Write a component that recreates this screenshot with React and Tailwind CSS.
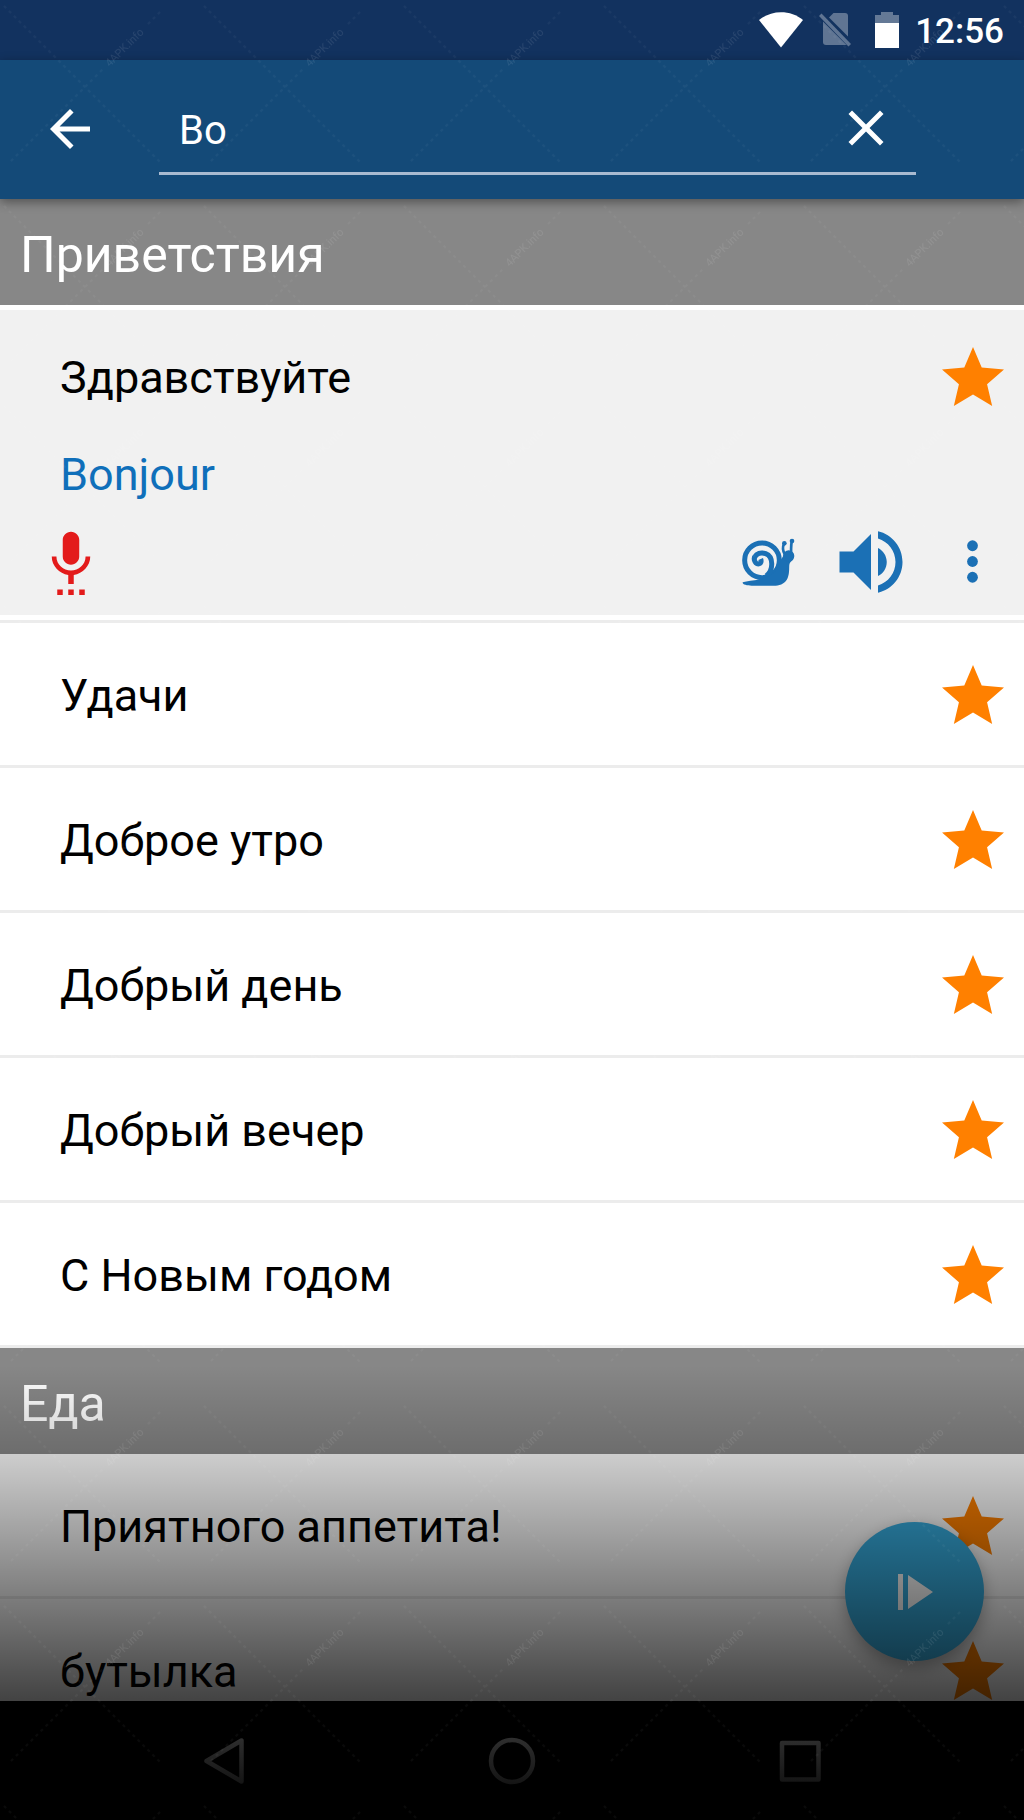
import React, { useState } from "react";

const greetings = ["Удачи", "Доброе утро", "Добрый день", "Добрый вечер", "С Новым годом"];
const food = ["Приятного аппетита!", "бутылка"];

function StatusBar() {
  return (
    <div className="flex h-[60px] shrink-0 items-center justify-end bg-[#12325f] pr-5 text-white">
      <svg className="mr-4 h-9 w-11" viewBox="0 0 44 36" fill="currentColor" aria-hidden="true">
        <path d="M0 8C12-2.500 32-2.500 44 8L22 35.500Z" />
      </svg>
      <svg className="mr-6 h-9 w-8" viewBox="0 0 32 36" fill="#fff" fillOpacity="0.33" aria-hidden="true">
        <path d="M10 5.500L14.500 1H26Q29 1 29 4V24.500Z" />
        <path d="M4 9.500L27.500 33H7Q4 33 4 30Z" />
        <path d="M0 4L2.500 1.500L32 32L29.500 34.500L27 32Z" />
      </svg>
      <svg className="mr-4 h-9 w-6" viewBox="0 0 24 36" fill="#fff" aria-hidden="true">
        <path fillOpacity="0.35" d="M6 0H18V3H24V11H0V3H6Z" />
        <path d="M0 11H24V36H0Z" />
      </svg>
      <span className="pt-1 text-[35px] leading-10 font-medium">12:56</span>
    </div>
  );
}

function SearchBar() {
  const [query, setQuery] = useState("Bo");
  return (
    <header className="relative z-10 flex shrink-0 items-start bg-[#144a78] pt-7 pb-6 pl-10 text-white shadow-[0_3px_10px_rgba(0,0,0,0.4)]">
      <button type="button" aria-label="Назад" className="flex h-[84px] w-[60px] items-center justify-center pb-[2px]">
        <svg className="size-[60px]" viewBox="0 0 24 24" fill="currentColor">
          <path d="M20 11H7.830l5.590-5.590L12 4l-8 8 8 8 1.410-1.410L7.830 13H20v-2z" />
        </svg>
      </button>
      <div className="mr-[108px] ml-[59px] flex min-w-0 flex-1 items-center border-b-[3px] border-[#a9bad0] px-5">
        <input
          type="text"
          aria-label="Поиск"
          value={query}
          onChange={(e) => setQuery(e.target.value)}
          className="h-[84px] min-w-0 flex-1 bg-transparent text-[40px] outline-none"
        />
        <button type="button" aria-label="Очистить" onClick={() => setQuery("")} className="pb-1">
          <svg className="size-[60px]" viewBox="0 0 24 24" fill="currentColor">
            <path d="M19 6.410L17.590 5 12 10.590 6.410 5 5 6.410 10.590 12 5 17.590 6.410 19 12 13.410 17.590 19 19 17.590 13.410 12z" />
          </svg>
        </button>
      </div>
    </header>
  );
}

function SectionTitle({ children }) {
  return (
    <h2 className="bg-[#878787] px-5 pt-[30px] pb-6 text-[50px] leading-[52px] text-white">{children}</h2>
  );
}

function StarButton() {
  return (
    <button type="button" aria-label="Избранное" className="shrink-0 text-[#ff8000]">
      <svg className="h-[59px] w-[62px]" viewBox="2 2 20 19" fill="currentColor">
        <path d="M12 17.270L18.180 21l-1.640-7.030L22 9.240l-7.190-.61L12 2 9.190 8.630 2 9.240l5.460 4.730L5.820 21z" />
      </svg>
    </button>
  );
}

function PhraseRow({ text }) {
  return (
    <li className="flex h-[145px] items-center border-b-[3px] border-[#ececec] bg-white pr-5 pl-[60px]">
      <span className="flex-1 pt-1 text-[45px] leading-[52px]">{text}</span>
      <StarButton />
    </li>
  );
}

function SnailIcon() {
  return (
    <svg className="h-12 w-[53px]" viewBox="35 44 159 144" fill="currentColor">
      <circle cx="95" cy="111" r="52" fill="none" stroke="currentColor" strokeWidth="15" />
      <path
        d="M108 158C130 140 130 100 106 91C84 83 66 100 74 115C80 127 97 122 91 107"
        fill="none"
        stroke="currentColor"
        strokeWidth="15"
      />
      <path d="M37 177C50 172 70 172 84 169L112 160C134 152 142 132 150 112L160 96L190 106C184 114 178 116 177 124C176 132 178 148 172 164C166 178 152 187 136 187H64C50 187 36 184 37 177Z" />
      <circle cx="175" cy="98" r="17" />
      <path d="M163 92C156 80 157 70 161 61M182 88C183 74 181 64 185 53" fill="none" stroke="currentColor" strokeWidth="8" />
      <circle cx="162" cy="60" r="7" />
      <circle cx="185" cy="53" r="7" />
    </svg>
  );
}

function ExpandedPhrase() {
  return (
    <li className="border-b-[3px] border-[#ececec]">
      <div className="border-y-[5px] border-white bg-[#f1f1f1]">
        <div className="flex h-[132px] items-center pr-5 pl-[60px]">
          <span className="flex-1 pt-1 text-[45px] leading-[52px]">Здравствуйте</span>
          <StarButton />
        </div>
        <p lang="fr" className="pl-[60px] text-[45px] leading-[66px] text-[#0f6fba]">
          Bonjour
        </p>
        <div className="flex h-[107px] items-center pr-5 pl-[38px] text-[#1b70b5]">
          <button type="button" aria-label="Записать" className="mr-auto text-[#e31b1b]">
            <svg className="size-[66px]" viewBox="0 0 24 24" fill="currentColor">
              <path d="M7 24h2v-2H7v2zm5-11c1.660 0 2.990-1.340 2.990-3L15 4c0-1.660-1.340-3-3-3S9 2.340 9 4v6c0 1.660 1.340 3 3 3zm-1 11h2v-2h-2v2zm4 0h2v-2h-2v2zm4-14h-1.700c0 3-2.540 5.100-5.300 5.100S6.700 13 6.700 10H5c0 3.410 2.720 6.230 6 6.720V20h2v-3.280c3.280-.49 6-3.310 6-6.720z" />
            </svg>
          </button>
          <button type="button" aria-label="Медленно" className="mr-[34px]">
            <SnailIcon />
          </button>
          <button type="button" aria-label="Прослушать" className="mr-7">
            <svg className="size-[84px]" viewBox="0 0 24 24" fill="currentColor">
              <path d="M3 9v6h4l5 5V4L7 9H3zm13.500 3c0-1.770-1.020-3.290-2.500-4.030v8.050c1.480-.73 2.500-2.250 2.500-4.020zM14 3.230v2.060c2.890.86 5 3.540 5 6.710s-2.110 5.850-5 6.710v2.060c4.010-.91 7-4.490 7-8.770s-2.990-7.860-7-8.770z" />
            </svg>
          </button>
          <button type="button" aria-label="Ещё">
            <svg className="size-[63px]" viewBox="0 0 24 24" fill="currentColor">
              <circle cx="12" cy="6" r="2.050" />
              <circle cx="12" cy="12" r="2.050" />
              <circle cx="12" cy="18" r="2.050" />
            </svg>
          </button>
        </div>
      </div>
    </li>
  );
}

function PlayButton() {
  return (
    <button
      type="button"
      aria-label="Воспроизвести всё"
      className="absolute right-10 bottom-10 flex size-[139px] items-center justify-center rounded-full bg-[#36abdd] text-white shadow-[0_6px_16px_rgba(0,0,0,0.3)]"
    >
      <svg className="h-9 w-9" viewBox="0 0 36 36" fill="currentColor">
        <path d="M1 0H6V36H1ZM11 1L36 18L11 35Z" />
      </svg>
    </button>
  );
}

function NavBar() {
  return (
    <nav className="flex h-[119px] shrink-0 items-center bg-black px-20 text-white">
      <button type="button" aria-label="Назад" className="flex flex-1 justify-center">
        <svg className="size-12" viewBox="0 0 48 48" fill="none" stroke="currentColor" strokeWidth="4.500" strokeLinejoin="round">
          <path d="M41.500 3.500V44.500L6.500 24Z" />
        </svg>
      </button>
      <button type="button" aria-label="Домой" className="flex flex-1 justify-center">
        <svg className="size-12" viewBox="0 0 48 48" fill="none" stroke="currentColor" strokeWidth="4.500">
          <circle cx="24" cy="24" r="21" />
        </svg>
      </button>
      <button type="button" aria-label="Обзор" className="flex flex-1 justify-center">
        <svg className="size-12" viewBox="0 0 48 48" fill="none" stroke="currentColor" strokeWidth="4.500" strokeLinejoin="round">
          <rect x="6" y="6" width="36.500" height="36.500" />
        </svg>
      </button>
    </nav>
  );
}

function Watermark() {
  return (
    <svg className="pointer-events-none absolute inset-0 z-30 h-full w-full" aria-hidden="true">
      <defs>
        <pattern id="mark" width="200" height="200" patternUnits="userSpaceOnUse">
          <path
            d="M4 6L162 164M11 161L103 69M148 24L160 12"
            fill="none"
            stroke="#fff"
            strokeOpacity="0.04"
            strokeWidth="2"
            strokeDasharray="3 4"
          />
          <text
            x="125"
            y="48"
            transform="rotate(-45 125 48)"
            textAnchor="middle"
            dominantBaseline="middle"
            fontSize="11"
            fill="#fff"
            fillOpacity="0.09"
          >
            4APK.info
          </text>
        </pattern>
      </defs>
      <rect width="100%" height="100%" fill="url(#mark)" />
    </svg>
  );
}

export default function App() {
  return (
    <div className="relative flex h-screen flex-col overflow-hidden bg-white font-['Roboto',sans-serif] text-black">
      <StatusBar />
      <SearchBar />
      <main className="relative min-h-0 flex-1 overflow-hidden">
        <SectionTitle>Приветствия</SectionTitle>
        <ul>
          <ExpandedPhrase />
          {greetings.map((text) => (
            <PhraseRow key={text} text={text} />
          ))}
        </ul>
        <SectionTitle>Еда</SectionTitle>
        <ul>
          {food.map((text) => (
            <PhraseRow key={text} text={text} />
          ))}
        </ul>
        <PlayButton />
      </main>
      <NavBar />
      <div className="pointer-events-none absolute inset-x-0 bottom-0 z-20 h-1/4 bg-linear-to-b from-black/0 to-black" />
      <Watermark />
    </div>
  );
}
